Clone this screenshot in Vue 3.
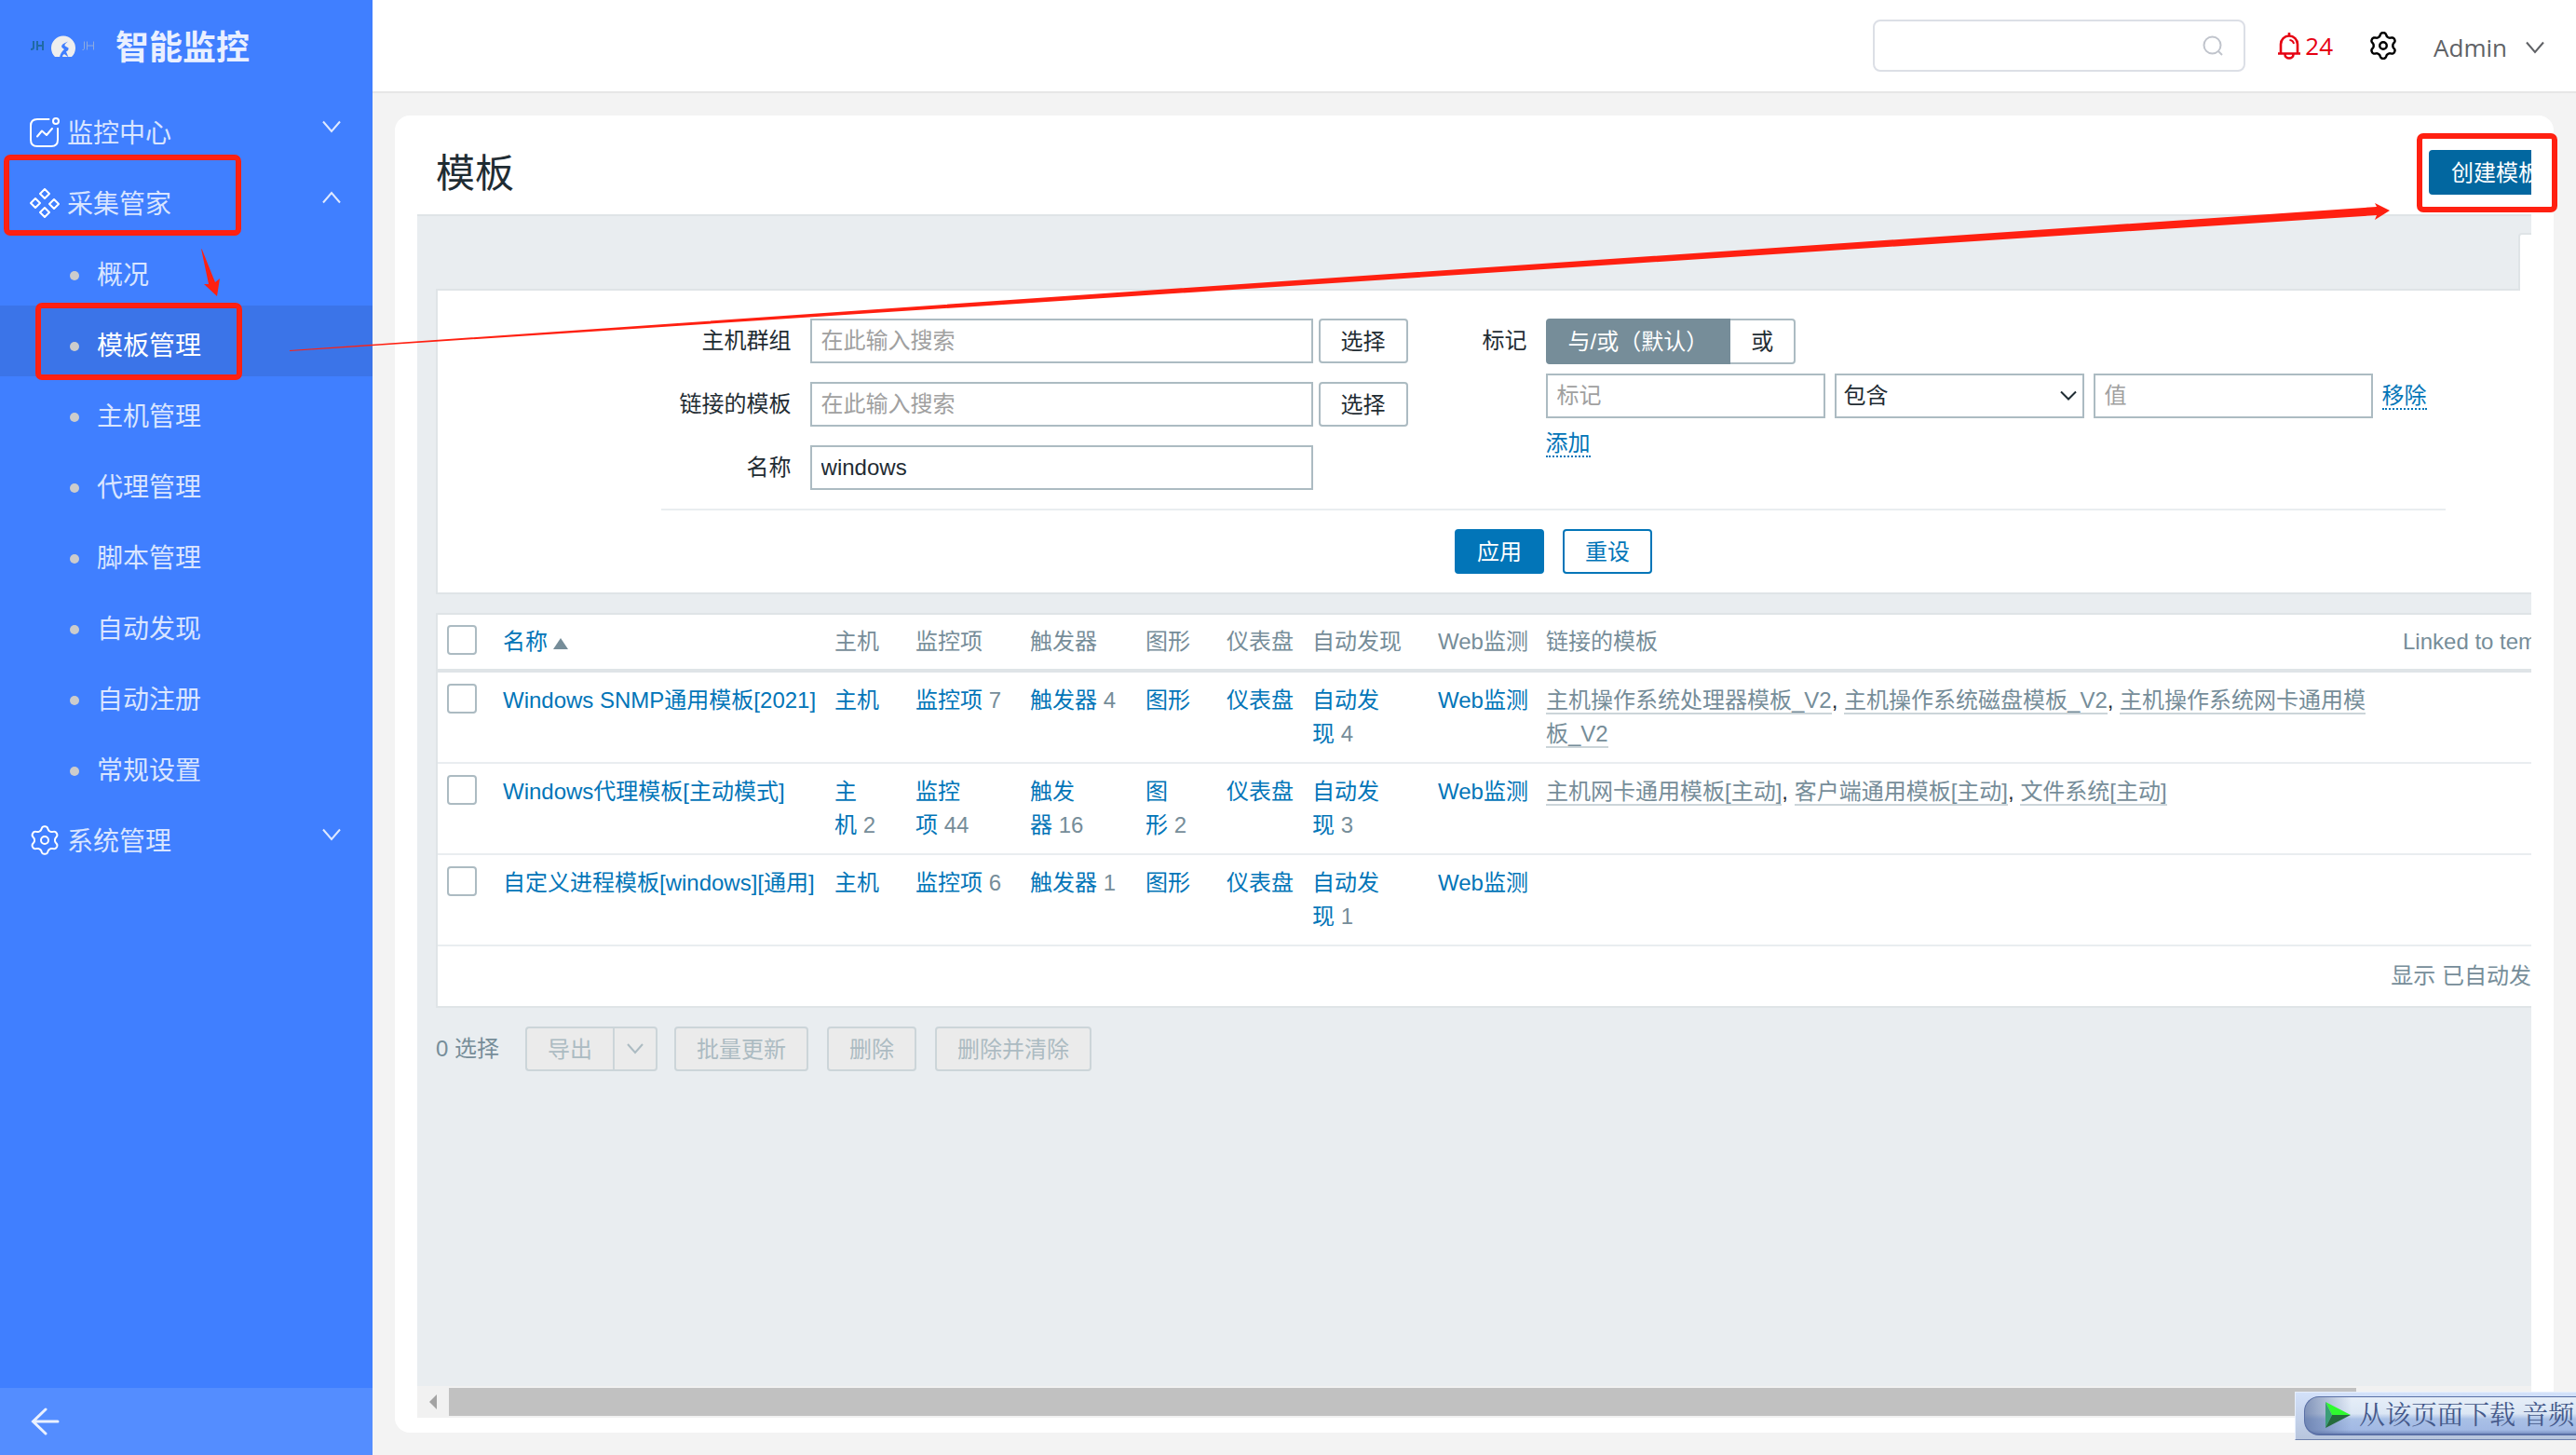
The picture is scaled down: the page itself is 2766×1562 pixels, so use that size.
<script setup>
import { ref } from 'vue'

const menu = [
  { label: '监控中心', icon: 'chart', open: false, children: [] },
  {
    label: '采集管家',
    icon: 'grid',
    open: true,
    children: ['概况', '模板管理', '主机管理', '代理管理', '脚本管理', '自动发现', '自动注册', '常规设置'],
  },
  { label: '系统管理', icon: 'gear', open: false, children: [] },
]
const active = '模板管理'

const columns = ['主机', '监控项', '触发器', '图形', '仪表盘', '自动发现', 'Web监测']
const rows = [
  {
    name: 'Windows SNMP通用模板[2021]',
    counts: ['', '7', '4', '', '', '4', ''],
    linked: ['主机操作系统处理器模板_V2', '主机操作系统磁盘模板_V2', '主机操作系统网卡通用模板_V2'],
  },
  {
    name: 'Windows代理模板[主动模式]',
    counts: ['2', '44', '16', '2', '', '3', ''],
    linked: ['主机网卡通用模板[主动]', '客户端通用模板[主动]', '文件系统[主动]'],
  },
  {
    name: '自定义进程模板[windows][通用]',
    counts: ['', '6', '1', '', '', '1', ''],
    linked: [],
  },
]

const name = ref('windows')
const operator = ref('contains')
const evaltype = ref('andor')

// Outline of a six-lobed cog in a 32 x 32 box
const gearPath = (() => {
  const pts = []
  for (let i = 0; i < 144; i++) {
    const a = (i / 144) * Math.PI * 2
    const s = Math.cos(6 * a)
    const r = 12.9 + (1.9 * s) / Math.sqrt(0.4 + 0.6 * s * s)
    pts.push(`${(16 + r * Math.sin(a)).toFixed(2)} ${(16 - r * Math.cos(a)).toFixed(2)}`)
  }
  return `M${pts.join('L')}Z`
})()
</script>

<template>
  <div class="shell">
    <aside class="sidebar">
      <div class="brand">
        <svg class="logo" width="72" height="28" viewBox="0 0 72 28">
          <g fill="none" stroke="#1f6aa5" stroke-width="2">
            <path d="M4 8v7q0 2-3 2M8 8v10M14 8v10M8 13h6" />
          </g>
          <path d="M27 25A13 13 0 1 1 45 25Z" fill="#eeeeee" />
          <path d="M32 25.500Q33 20 37 17L34.500 15Q33 12.500 37 10.500L41 8.500Q36 12 38 13.500L41.500 15.500Q42 18 39 19.500L41.500 25.500Z" fill="#407fff" />
          <path d="M35 25q0-2 2-3l4 3z" fill="#eeeeee" />
          <g fill="none" stroke="#8eabdf" stroke-width="1">
            <path d="M58.500 8.500v8q0 1-2 1M61.500 8.500v9M68.500 8.500v9M61.500 13h7" />
          </g>
        </svg>
        <span class="brand-name">智能监控</span>
      </div>
      <nav class="menu">
        <template v-for="group in menu" :key="group.label">
          <button type="button" class="group">
            <svg class="group-icon" width="32" height="32" viewBox="0 0 32 32" fill="none" stroke="#fff" stroke-width="2">
              <template v-if="group.icon === 'chart'">
                <path d="M20.500 2H8Q1 2 1 9v15q0 7 7 7h15q7 0 7-7V12" stroke-linecap="round" />
                <circle cx="28" cy="4" r="3" />
                <path d="M8 20.500l5-6 5 4.500 6-7" stroke-linecap="round" stroke-linejoin="round" />
              </template>
              <template v-else-if="group.icon === 'grid'">
                <path d="M16 1l5 5-5 5-5-5zM16 21l5 5-5 5-5-5zM6 11l5 5-5 5-5-5zM26 12l5 5-5 5-5-5z" stroke-linejoin="round" />
              </template>
              <template v-else>
                <path :d="gearPath" />
                <circle cx="16" cy="16" r="4" />
              </template>
            </svg>
            <span class="group-label">{{ group.label }}</span>
            <svg class="group-arrow" width="20" height="14" viewBox="0 0 20 14" fill="none" stroke="#dfe9ff" stroke-width="2">
              <path :d="group.open ? 'M1 12.500L10 2l9 10.500' : 'M1 1.500L10 12l9-10.500'" />
            </svg>
          </button>
          <a
            v-for="child in group.children"
            :key="child"
            href="#"
            class="item"
            :class="{ active: child === active }"
          >{{ child }}</a>
        </template>
      </nav>
      <button type="button" class="collapse" aria-label="收起">
        <svg width="32" height="30" viewBox="0 0 32 30" fill="none" stroke="#eaf1ff" stroke-width="3" stroke-linecap="round">
          <path d="M17 2L3.500 15 17 28M3.500 15H30" />
        </svg>
      </button>
    </aside>

    <div class="page">
      <header class="topbar">
        <div class="search">
          <input type="text" aria-label="搜索" />
          <svg width="22" height="22" viewBox="0 0 22 22" fill="none" stroke="#c0c4cc" stroke-width="2">
            <circle cx="10.500" cy="10.500" r="9" />
            <path d="M17 17l4 4" />
          </svg>
        </div>
        <a href="#" class="alerts">
          <svg width="26" height="30" viewBox="0 0 26 30" fill="none" stroke="#e60012" stroke-width="2.600">
            <path d="M13 1v3M1 23.500h24M4 23.500V13.500a9 9 0 0 1 18 0v10M8.500 24.500a4.500 4 0 0 0 9 0" />
            <path d="M13.500 9q4 0.500 4.500 4" stroke-width="2" />
          </svg>
          <span>24</span>
        </a>
        <button type="button" class="settings" aria-label="设置">
          <svg width="30" height="30" viewBox="0 0 32 32" fill="none" stroke="#000" stroke-width="2.600">
            <path :d="gearPath" />
            <circle cx="16" cy="16" r="4" />
          </svg>
        </button>
        <button type="button" class="user">
          <span>Admin</span>
          <svg width="20" height="14" viewBox="0 0 20 14" fill="none" stroke="#606266" stroke-width="2">
            <path d="M1 1.500L10 12l9-10.500" />
          </svg>
        </button>
      </header>

      <main class="card">
        <div class="viewport">
          <div class="content">
            <div class="heading">
              <h1>模板</h1>
              <div class="heading-actions">
                <button type="button" class="btn create">创建模板</button>
                <button type="button" class="btn">导入</button>
              </div>
            </div>

            <div class="body">
              <div class="tabs">
                <button type="button" class="tab">过滤器</button>
              </div>

              <form class="filter" @submit.prevent>
                <div class="filter-fields">
                  <div class="fields">
                    <label for="groups">主机群组</label>
                    <div class="field">
                      <input id="groups" class="text" type="text" placeholder="在此输入搜索" />
                      <button type="button" class="btn">选择</button>
                    </div>
                    <label for="linked">链接的模板</label>
                    <div class="field">
                      <input id="linked" class="text" type="text" placeholder="在此输入搜索" />
                      <button type="button" class="btn">选择</button>
                    </div>
                    <label for="name">名称</label>
                    <div class="field">
                      <input id="name" v-model="name" class="text" type="text" />
                    </div>
                  </div>
                  <div class="tags">
                    <span class="tags-label">标记</span>
                    <div class="tags-body">
                      <div class="segmented" role="radiogroup" aria-label="标记">
                        <label><input v-model="evaltype" type="radio" name="evaltype" value="andor" /><span>与/或（默认）</span></label>
                        <label><input v-model="evaltype" type="radio" name="evaltype" value="or" /><span>或</span></label>
                      </div>
                      <div class="tag-row">
                        <input class="text tag" type="text" placeholder="标记" aria-label="标记" />
                        <div class="select">
                          <select v-model="operator" aria-label="运算符">
                            <option value="contains">包含</option>
                            <option value="equals">等于</option>
                          </select>
                          <svg width="18" height="12" viewBox="0 0 18 12" fill="none" stroke="#1f2c33" stroke-width="2">
                            <path d="M1 1.500l8 8 8-8" />
                          </svg>
                        </div>
                        <input class="text tag" type="text" placeholder="值" aria-label="值" />
                        <a href="#" class="dotted">移除</a>
                      </div>
                      <div class="tag-add"><a href="#" class="dotted">添加</a></div>
                    </div>
                  </div>
                </div>
                <div class="filter-actions">
                  <button type="submit" class="btn primary">应用</button>
                  <button type="reset" class="btn outline">重设</button>
                </div>
              </form>

              <div class="list">
                <table>
                  <colgroup>
                    <col class="c-check" /><col class="c-name" /><col class="c-hosts" /><col class="c-items" />
                    <col class="c-triggers" /><col class="c-graphs" /><col class="c-dash" /><col class="c-disc" />
                    <col class="c-web" /><col /><col class="c-to" />
                  </colgroup>
                  <thead>
                    <tr>
                      <th><input type="checkbox" aria-label="全选" /></th>
                      <th><a href="#">名称<span class="sort"></span></a></th>
                      <th v-for="c in columns" :key="c">{{ c }}</th>
                      <th>链接的模板</th>
                      <th>Linked to templates</th>
                    </tr>
                  </thead>
                  <tbody>
                    <tr v-for="row in rows" :key="row.name">
                      <td><input type="checkbox" :aria-label="row.name" /></td>
                      <td class="nowrap"><a href="#">{{ row.name }}</a></td>
                      <td v-for="(c, i) in columns" :key="c" :class="{ nowrap: !row.counts[i] }"><a href="#">{{ c }}</a><span v-if="row.counts[i]" class="count">&nbsp;{{ row.counts[i] }}</span></td>
                      <td><template v-for="(l, i) in row.linked" :key="l"><template v-if="i">, </template><a href="#" class="grey">{{ l }}</a></template></td>
                      <td></td>
                    </tr>
                  </tbody>
                </table>
                <div class="stats">显示 已自动发现的 3中的 3</div>
              </div>

              <div class="bulk">
                <span>0 选择</span>
                <div class="split">
                  <button type="button" class="btn" disabled>导出</button>
                  <button type="button" class="btn more" disabled aria-label="更多">
                    <svg width="18" height="12" viewBox="0 0 18 12" fill="none" stroke="#acbbc2" stroke-width="2">
                      <path d="M1 1l8 9 8-9" />
                    </svg>
                  </button>
                </div>
                <div class="bulk-actions">
                  <button type="button" class="btn" disabled>批量更新</button>
                  <button type="button" class="btn" disabled>删除</button>
                  <button type="button" class="btn" disabled>删除并清除</button>
                </div>
              </div>
            </div>
          </div>
        </div>
        <div class="scrollbar">
          <span class="step left"></span>
          <span class="track"><span class="thumb"></span></span>
          <span class="step right"></span>
        </div>
      </main>
    </div>

    <svg class="marks" fill="none" stroke="#ff2011" stroke-width="6">
      <rect x="7" y="169" width="249" height="81" rx="4" />
      <rect x="41" y="328" width="216" height="77" rx="4" />
      <rect x="2598" y="146" width="145" height="79" rx="4" />
      <path d="M216 267L217 268 231 303 236 299 233 318 219 305 224 305Z" fill="#ff2011" stroke="none" />
      <path d="M311 376L1200 314 1980 261 2552 222 2550 218 2566 226 2550 236 2552 231 1980 268 1200 319 311 377Z" fill="#ff2011" stroke="none" />
    </svg>

    <div class="download">
      <button type="button">
        <svg width="28" height="30" viewBox="0 0 28 30">
          <path d="M0 1l27 14H7z" fill="#2ffb2f" />
          <path d="M0 1l7 14-7 14z" fill="#3b9d78" />
          <path d="M0 29l7-14h20z" fill="#256b3c" />
        </svg>
        <span>从该页面下载 音频</span>
      </button>
    </div>
  </div>
</template>

<style>
body {
  margin: 0;
}
</style>

<style scoped>
* {
  box-sizing: border-box;
}
.shell {
  position: relative;
  display: flex;
  min-height: 100vh;
  overflow: hidden;
  background: #f3f3f3;
  color: #1f2c33;
  font: 24px/36px "Liberation Sans", "Noto Sans CJK SC", sans-serif;
}
button,
input,
select {
  margin: 0;
  font: inherit;
  color: inherit;
}
button {
  border: 0;
  padding: 0;
  background: none;
}
a {
  color: #0275b8;
  text-decoration: none;
}
svg {
  display: block;
  flex: none;
}

/* Sidebar */
.sidebar {
  flex: none;
  display: flex;
  flex-direction: column;
  width: 400px;
  background: #407fff;
}
.brand {
  display: flex;
  align-items: center;
  gap: 20px;
  height: 100px;
  padding-left: 32px;
}
.brand-name {
  padding-top: 4px;
  color: #eaf0ff;
  font-size: 36px;
  font-weight: 700;
}
.menu {
  flex: 1;
}
.group,
.item {
  display: flex;
  align-items: center;
  width: 100%;
  height: 76px;
  color: #d9e5ff;
  font-size: 28px;
}
.group {
  gap: 8px;
  padding: 8px 34px 0 32px;
}
.group-label {
  padding-top: 4px;
}
.group-arrow {
  margin: 0 0 12px auto;
}
.item {
  gap: 19px;
  padding: 12px 0 0 75px;
}
.item::before {
  content: "";
  width: 10px;
  height: 10px;
  border-radius: 50%;
  background: #ccc;
}
.item.active {
  background: #3b74e8;
  color: #fff;
}
.collapse {
  display: flex;
  align-items: center;
  height: 72px;
  padding-left: 32px;
  background: #548dff;
}

/* Top bar */
.page {
  flex: 1;
  display: flex;
  flex-direction: column;
  min-width: 0;
}
.topbar {
  display: flex;
  align-items: center;
  justify-content: flex-end;
  height: 100px;
  padding-right: 34px;
  border-bottom: 2px solid #e6e6e6;
  background: #fff;
  font-family: "Open Sans", "Noto Sans CJK SC", sans-serif;
  font-size: 26px;
}
.search {
  position: relative;
}
.search input {
  display: block;
  width: 400px;
  height: 56px;
  padding: 0 56px 0 20px;
  border: 2px solid #dcdfe6;
  border-radius: 8px;
  background: #fff;
}
.search svg {
  position: absolute;
  top: 17px;
  right: 24px;
}
.alerts {
  display: flex;
  align-items: center;
  gap: 4px;
  margin-left: 34px;
  color: #e60012;
}
.settings {
  margin-left: 39px;
}
.user {
  display: flex;
  align-items: center;
  gap: 20px;
  margin-left: 39px;
  padding-top: 4px;
  color: #606266;
}

/* Card and its scrolling area */
.card {
  flex: 1;
  display: flex;
  flex-direction: column;
  margin: 24px;
  padding: 0 24px 16px;
  border-radius: 16px;
  background: #fff;
}
.viewport {
  flex: 1;
  display: flex;
  overflow: hidden;
}
.content {
  flex: none;
  display: flex;
  flex-direction: column;
  width: calc(100% + 170px);
}
.heading {
  display: flex;
  align-items: center;
  justify-content: space-between;
  height: 106px;
  padding: 16px 20px 0;
}
h1 {
  margin: 0;
  padding-top: 4px;
  font-size: 42px;
  font-weight: 400;
}
.heading-actions {
  display: flex;
  gap: 20px;
}
.body {
  flex: 1;
  padding: 0 20px 20px;
  border-top: 2px solid #dfe4e7;
  background: #e9edf0;
}
.btn {
  height: 48px;
  padding: 2px 22px 0;
  border: 2px solid #acbbc2;
  border-radius: 4px;
  background: #fff;
  line-height: 42px;
  white-space: nowrap;
}
.btn.create {
  border-color: #0267a0;
  background: #0267a0;
  color: #fff;
}
.btn.primary {
  border-color: #0275b8;
  background: #0275b8;
  color: #fff;
}
.btn.outline {
  border-color: #0275b8;
  color: #0275b8;
}
.btn:disabled {
  border-color: #ccd5d9;
  background: #ebebeb;
  color: #acbbc2;
}
.tabs {
  display: flex;
  justify-content: flex-end;
  height: 78px;
  padding-top: 18px;
}
.tab {
  position: relative;
  width: 164px;
  height: 62px;
  border: 2px solid #dfe4e7;
  border-bottom: 0;
  border-radius: 4px 4px 0 0;
  background: #fff;
}

/* Filter */
.filter {
  padding: 30px 0 20px;
  border: 2px solid #dfe4e7;
  background: #fff;
}
.filter-fields {
  display: flex;
  width: 80%;
  margin: 0 auto;
  padding-bottom: 20px;
  border-bottom: 2px solid #e9edf0;
}
.fields {
  display: grid;
  grid-template-columns: 140px auto;
  gap: 20px;
  align-items: center;
}
.fields > label,
.tags-label {
  text-align: right;
}
.field {
  display: flex;
  gap: 6px;
}
.text,
.select select {
  height: 48px;
  padding: 0 10px;
  border: 2px solid #acbbc2;
  border-radius: 0;
  background: #fff;
}
.text {
  width: 540px;
}
.text::placeholder {
  color: #a0a0a0;
  opacity: 1;
}
.tags {
  display: flex;
  gap: 20px;
}
.tags-label {
  width: 128px;
  line-height: 48px;
}
.segmented {
  display: flex;
  height: 49px;
  margin-bottom: 10px;
}
.segmented label {
  position: relative;
}
.segmented input {
  position: absolute;
  inset: 0;
  opacity: 0;
}
.segmented span {
  display: block;
  height: 49px;
  padding: 0 22px;
  border: 2px solid #acbbc2;
  border-radius: 0 4px 4px 0;
  line-height: 45px;
}
.segmented label:first-child span {
  border-radius: 4px 0 0 4px;
}
.segmented label:last-child span {
  border-left: 0;
}
.segmented input:checked + span {
  border-color: #768d99;
  background: #768d99;
  color: #fff;
}
.tag-row {
  display: flex;
  align-items: center;
  gap: 10px;
}
.text.tag {
  width: 300px;
}
.select {
  position: relative;
}
.select select {
  display: block;
  width: 268px;
  padding: 0 8px;
  appearance: none;
}
.select svg {
  position: absolute;
  top: 18px;
  right: 8px;
}
.tag-add {
  margin-top: 9px;
}
.dotted {
  border-bottom: 2px dotted #0275b8;
  line-height: 27px;
}
.filter-actions {
  display: flex;
  justify-content: center;
  gap: 20px;
  margin-top: 20px;
}

/* Template list */
.list {
  margin-top: 20px;
  border: 2px solid #dfe4e7;
  background: #fff;
}
table {
  width: 100%;
  border-collapse: separate;
  border-spacing: 0;
  table-layout: fixed;
}
.c-check { width: 60px; }
.c-name { width: 356px; }
.c-hosts { width: 87px; }
.c-items { width: 123px; }
.c-triggers { width: 124px; }
.c-graphs { width: 87px; }
.c-dash { width: 92px; }
.c-disc { width: 135px; }
.c-web { width: 116px; }
.c-to { width: 296px; }
th,
td {
  padding: 12px 10px;
  border-bottom: 2px solid #e9edf0;
  text-align: left;
  vertical-align: top;
}
th {
  padding: 11px 10px;
  border-bottom: 4px solid #dfe4e7;
  color: #768d99;
  font-weight: 400;
  white-space: nowrap;
}
.nowrap {
  white-space: nowrap;
}
.sort {
  display: inline-block;
  margin-left: 6px;
  border: 8px solid transparent;
  border-top: 0;
  border-bottom: 12px solid #768d99;
}
input[type="checkbox"] {
  display: block;
  width: 32px;
  height: 32px;
  border: 2px solid #acbbc2;
  border-radius: 4px;
  background: #fff;
  appearance: none;
}
.count {
  color: #768d99;
}
.grey {
  border-bottom: 2px solid #ccd5d9;
  color: #768d99;
}
.stats {
  padding: 14px 12px;
  color: #768d99;
  text-align: right;
}
.bulk {
  display: flex;
  align-items: center;
  gap: 18px;
  margin-top: 20px;
  color: #768d99;
}
.bulk-actions {
  display: flex;
  gap: 20px;
}
.split {
  display: flex;
  margin-left: 10px;
}
.split .btn:first-child {
  border-right: 0;
  border-radius: 4px 0 0 4px;
}
.btn.more {
  padding: 0 13px;
  border-radius: 0 4px 4px 0;
}

/* Horizontal scroll bar */
.scrollbar {
  display: flex;
  align-items: center;
  height: 34px;
  background: #f1f1f1;
}
.step {
  display: flex;
  justify-content: center;
  width: 34px;
}
.step::before {
  content: "";
  border: 8px solid transparent;
}
.step.left::before {
  border-left: 0;
  border-right-color: #a3a3a3;
}
.step.right::before {
  border-right: 0;
  border-left-color: #a3a3a3;
}
.track {
  flex: 1;
}
.thumb {
  display: block;
  width: 93%;
  height: 30px;
  background: #c1c1c1;
}

/* Red marks over the page */
.marks {
  position: absolute;
  inset: 0;
  width: 100%;
  height: 100%;
  pointer-events: none;
}

/* Floating download bar */
.download {
  position: absolute;
  right: 0;
  bottom: 16px;
  width: 302px;
  padding: 4px 0 4px 9px;
  border: 1px solid #e6eefc;
  border-bottom-color: #6f82ad;
  border-right: 0;
  background: linear-gradient(#d3e1fa, #b7c5dd);
}
.download button {
  display: flex;
  align-items: center;
  gap: 8px;
  width: 100%;
  height: 42px;
  padding: 0 0 1px 22px;
  border: 1px solid #5a70a6;
  border-right: 0;
  border-bottom-width: 2px;
  border-radius: 16px 0 0 16px;
  background:
    linear-gradient(90deg, rgba(90, 112, 160, 0.7), rgba(90, 112, 160, 0) 50px),
    linear-gradient(#e6eef8, #dbe6f4 45%, #a9c0e6 60%, #a2b9e4 90%, #7c93c4);
  color: #44588a;
  font-family: "Noto Serif CJK SC", "Liberation Serif", "Noto Sans CJK SC", serif;
  font-size: 28px;
  white-space: nowrap;
}
.download span {
  padding-bottom: 4px;
}
</style>
